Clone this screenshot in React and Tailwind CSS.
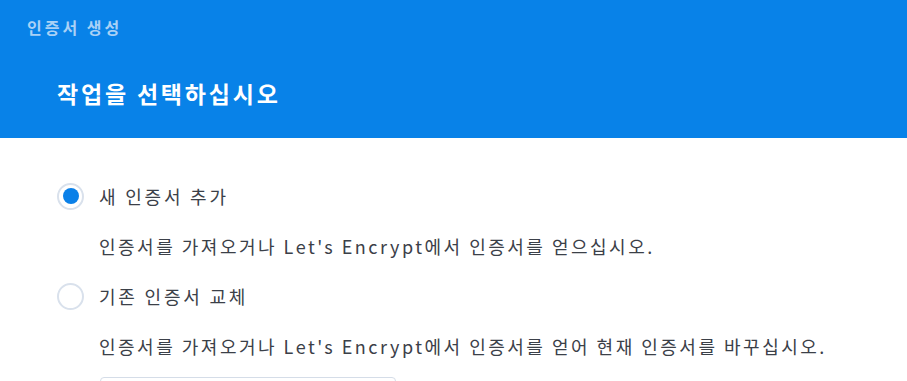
import { useState } from 'react';

const options = [
  {
    id: 'new',
    label: '새 인증서 추가',
    desc: "인증서를 가져오거나 Let's Encrypt에서 인증서를 얻으십시오.",
  },
  {
    id: 'replace',
    label: '기존 인증서 교체',
    desc: "인증서를 가져오거나 Let's Encrypt에서 인증서를 얻어 현재 인증서를 바꾸십시오.",
  },
];

const Radio = ({ checked }) => (
  <span className="w-[27px] h-[27px] rounded-full border-2 border-[#d9e1ec] bg-white flex items-center justify-center shrink-0">
    {checked && <span className="w-[16px] h-[16px] rounded-full bg-[#0a80e8]" />}
  </span>
);

export default function App() {
  const [selected, setSelected] = useState('new');

  return (
    <div className="w-[907px] h-[381px] overflow-hidden bg-white font-['Noto_Sans_CJK_KR','Noto_Sans',sans-serif]">
      {/* header */}
      <div className="h-[138px] bg-[#0882e8] flex flex-col">
        <div className="pl-[27px] pt-[15px] text-[16px] font-bold leading-[24px] tracking-[3px] text-[#a9d1f6]">
          인증서 생성
        </div>
        <div className="pl-[57px] pt-[39px] text-[23px] font-bold leading-[30px] tracking-[2.8px] text-white">
          작업을 선택하십시오
        </div>
      </div>

      {/* options */}
      <div className="pl-[57px] pt-[33px] flex flex-col">
        {options.map((opt) => (
          <div key={opt.id} className="flex flex-col">
            <label
              className="h-[50px] flex items-center gap-[15px] cursor-pointer"
              onClick={() => setSelected(opt.id)}
            >
              <Radio checked={selected === opt.id} />
              <span className="text-[18px] tracking-[2.8px] text-[#3b4048]">{opt.label}</span>
            </label>
            <div className="h-[50px] flex items-center pl-[42px] text-[18px] tracking-[2.5px] text-[#3b4048]">
              {opt.desc}
            </div>
          </div>
        ))}
        <div className="ml-[43px] mt-[6px] w-[296px] h-[32px] rounded-[4px] border border-[#d5dde8]" />
      </div>
    </div>
  );
}
